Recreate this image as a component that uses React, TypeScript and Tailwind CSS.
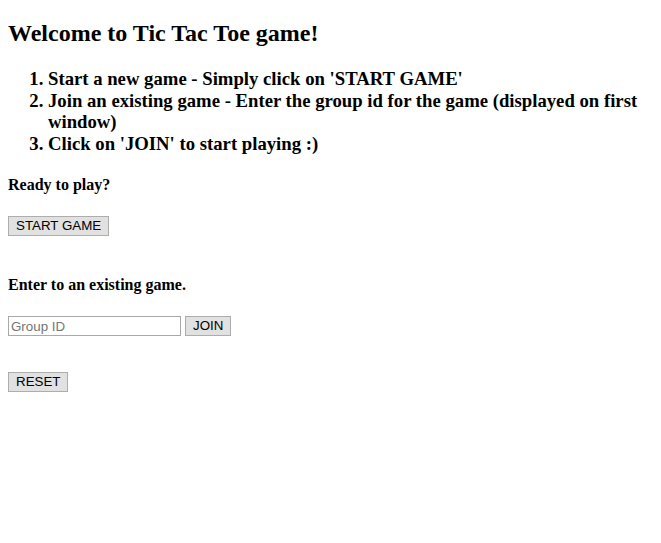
import { useState } from 'react'

const serif = "font-['Liberation_Serif','Times_New_Roman',serif]"
const btn =
  "h-[20px] px-[7px] border border-[#adadad] bg-[#e1e1e1] text-[13.33px] leading-[16px] text-black font-['Liberation_Sans',Arial,sans-serif]"

export default function App() {
  const [groupId, setGroupId] = useState('')

  return (
    <div className={`min-h-[543px] bg-white px-2 pt-[20px] text-black ${serif}`}>
      <h2 className="text-[24px] font-bold leading-[27.6px]">Welcome to Tic Tac Toe game!</h2>

      <ol className="mt-[20px] list-decimal pl-[40px] text-[18.72px] font-bold leading-[21.9px]">
        <li>Start a new game - Simply click on 'START GAME'</li>
        <li>Join an existing game - Enter the group id for the game (displayed on first window)</li>
        <li>Click on 'JOIN' to start playing :)</li>
      </ol>

      <h4 className="mt-[21px] text-[16px] font-bold leading-[18.4px]">Ready to play?</h4>
      <div className="mt-[21px] flex">
        <button className={btn}>START GAME</button>
      </div>

      <h4 className="mt-[40px] text-[16px] font-bold leading-[18.4px]">Enter to an existing game.</h4>
      <div className="mt-[22px] flex items-center gap-[4px]">
        <input
          value={groupId}
          onChange={(e) => setGroupId(e.target.value)}
          placeholder="Group ID"
          className="h-[20px] w-[173px] border border-[#a9a9a9] px-[2px] text-[13.33px] font-['Liberation_Sans',Arial,sans-serif] placeholder:text-[#757575] outline-none"
        />
        <button className={btn}>JOIN</button>
      </div>

      <div className="mt-[36px] flex">
        <button className={btn}>RESET</button>
      </div>
    </div>
  )
}
